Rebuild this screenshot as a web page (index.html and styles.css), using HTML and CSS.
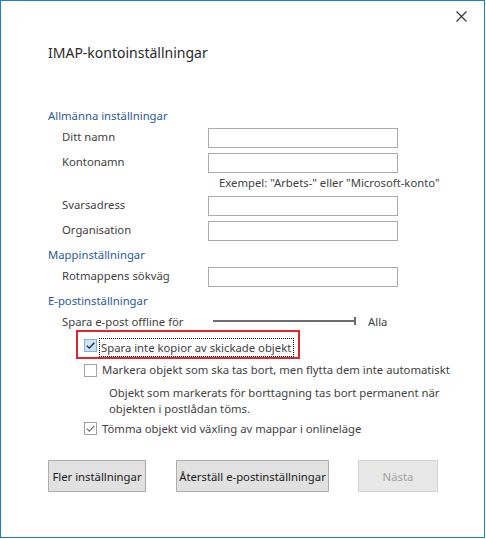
FILE: index.html
```html
<!DOCTYPE html>
<html lang="sv">
<head>
<meta charset="utf-8">
<title>IMAP-kontoinställningar</title>
<link rel="stylesheet" href="styles.css">
</head>
<body>
<div class="dialog">
  <div class="titlebar">
    <button class="close" aria-label="Stäng">
      <svg width="11" height="11" viewBox="0 0 11 11"><path d="M0.5 0.5 L10.5 10.5 M10.5 0.5 L0.5 10.5" stroke="#333" stroke-width="1.1" fill="none"/></svg>
    </button>
  </div>
  <h1 class="title">IMAP-kontoinställningar</h1>

  <h2 class="group-head first">Allmänna inställningar</h2>
  <div class="field"><label class="label">Ditt namn</label><input class="text" type="text"></div>
  <div class="field"><label class="label">Kontonamn</label><input class="text" type="text"></div>
  <div class="hint">Exempel: "Arbets-" eller "Microsoft-konto"</div>
  <div class="field"><label class="label">Svarsadress</label><input class="text" type="text"></div>
  <div class="field"><label class="label">Organisation</label><input class="text" type="text"></div>

  <h2 class="group-head">Mappinställningar</h2>
  <div class="field"><label class="label">Rotmappens sökväg</label><input class="text" type="text"></div>

  <h2 class="group-head">E-postinställningar</h2>
  <div class="slider-row">
    <span class="label">Spara e-post offline för</span>
    <div class="slider"><span class="track"></span><span class="thumb"></span></div>
    <span class="slider-value">Alla</span>
  </div>

  <div class="highlight">
    <span class="check checked focused">
      <svg width="11" height="11" viewBox="0 0 11 11"><path d="M1.8 5.6 L4.3 8.1 L9.3 2.8" stroke="#222" stroke-width="1.3" fill="none"/></svg>
    </span>
    <span class="focus-label">Spara inte kopior av skickade objekt</span>
  </div>

  <div class="check-row">
    <span class="check"></span>
    <span class="check-text">Markera objekt som ska tas bort, men flytta dem inte automatiskt</span>
  </div>
  <p class="desc">Objekt som markerats för borttagning tas bort permanent när objekten i postlådan töms.</p>
  <div class="check-row last">
    <span class="check checked">
      <svg width="11" height="11" viewBox="0 0 11 11"><path d="M1.8 5.6 L4.3 8.1 L9.3 2.8" stroke="#6f6f6f" stroke-width="1.2" fill="none"/></svg>
    </span>
    <span class="check-text">Tömma objekt vid växling av mappar i onlineläge</span>
  </div>

  <div class="buttons">
    <button class="btn btn-more">Fler inställningar</button>
    <button class="btn btn-reset">Återställ e-postinställningar</button>
    <button class="btn btn-next" disabled>Nästa</button>
  </div>
</div>
</body>
</html>
```

FILE: styles.css
```css
* { box-sizing: border-box; }
html, body { margin: 0; padding: 0; background: #fff; }
body { font-family: "Noto Sans", "DejaVu Sans", sans-serif; }

.dialog {
  width: 485px;
  height: 538px;
  border: 1px solid #1a7fd4;
  padding-left: 47px;
  display: flex;
  flex-direction: column;
  font-size: 11.3px;
  color: #424242;
}

.titlebar {
  height: 31px;
  display: flex;
  justify-content: flex-end;
  align-items: center;
  padding-right: 17px;
}
.close {
  width: 11px;
  height: 11px;
  padding: 0;
  border: 0;
  background: none;
  display: flex;
}

.title {
  margin: 11px 0 0;
  font-size: 14px;
  line-height: 20px;
  font-weight: normal;
  color: #2a2a2a;
  height: 20px;
}

.group-head {
  margin: 3px 0 0;
  font-size: 11.3px;
  font-weight: normal;
  line-height: 18px;
  height: 18px;
  color: #2b5a9b;
}
.group-head.first { margin-top: 44px; }

.field {
  height: 25px;
  padding-left: 14px;
  display: grid;
  grid-template-columns: 146px 190px;
  align-items: center;
}
.label { white-space: nowrap; }
.field .label { padding-bottom: 2px; }
.text {
  width: 190px;
  height: 20px;
  border: 1px solid #ababab;
  margin: 0;
  padding: 0 3px;
  background: #fff;
  font: inherit;
}

.hint {
  height: 18px;
  line-height: 16px;
  padding-bottom: 2px;
  padding-left: 171px;
  white-space: nowrap;
}

.slider-row {
  height: 20px;
  padding: 2px 0 0 14px;
  display: flex;
  align-items: center;
}
.slider-row .label { width: 151px; }
.slider {
  width: 143px;
  height: 8px;
  display: flex;
  align-items: center;
}
.track {
  flex: 1;
  height: 2px;
  background: #6d6d6d;
}
.thumb {
  width: 2px;
  height: 8px;
  background: #6d6d6d;
}
.slider-value { margin-left: 12px; }

.highlight {
  align-self: flex-start;
  margin-left: 28px;
  height: 29px;
  border: 2px solid #e3262d;
  padding: 6px 4px 0 6px;
  display: flex;
  align-items: flex-start;
}
.check {
  width: 13px;
  height: 13px;
  border: 1px solid #a2a2a2;
  background: #fff;
  display: flex;
  align-items: center;
  justify-content: center;
  flex: none;
}
.check.focused {
  border-color: #7fb2e5;
  background: #cce4f7;
}
.highlight .check { margin-top: 1px; }
.focus-label {
  margin-left: 2px;
  border: 1px dotted #000;
  padding: 0 2px 0 1px;
  line-height: 17px;
  white-space: nowrap;
}

.check-row {
  height: 22px;
  padding-left: 36px;
  display: flex;
  align-items: center;
}
.check-row.last { height: 23px; }
.check-text {
  margin-left: 5px;
  padding-bottom: 1px;
  white-space: nowrap;
}

.desc {
  margin: 4px 0 0;
  padding-left: 61px;
  width: 410px;
  line-height: 16px;
}

.buttons {
  margin-top: 20px;
  display: flex;
  gap: 30px;
}
.btn {
  height: 32px;
  margin: 0;
  padding: 0;
  border: 1px solid #adadad;
  background: #e1e1e1;
  font: inherit;
  color: #1b1b1b;
}
.btn-more { width: 98px; }
.btn-reset { width: 153px; }
.btn-next { width: 80px; margin-left: -1px; }
.btn[disabled] {
  background: #e8e8e8;
  border-color: #d2d2d2;
  color: #a2a2a2;
}
```
